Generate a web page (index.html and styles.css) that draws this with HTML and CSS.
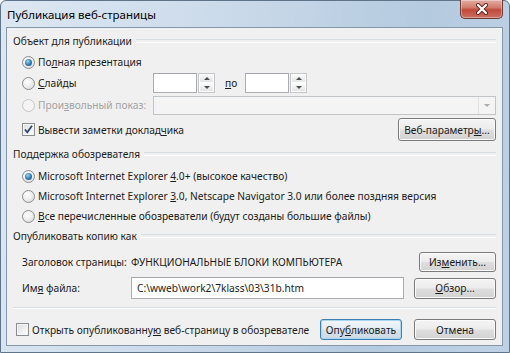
FILE: index.html
```html
<html>
<head>
	<link rel="stylesheet" href="styles.css">
</head>
<body>

<div class="window">
	<div class="titlebar">
		<span class="title">Публикация веб-страницы</span>
		<div class="close">
			<svg width="14" height="12" viewBox="0 0 14 12">
				<path d="M3 2 L11 10 M11 2 L3 10" stroke="#5a2520" stroke-width="4" stroke-linecap="round"/>
				<path d="M3 2 L11 10 M11 2 L3 10" stroke="#ffffff" stroke-width="2.2" stroke-linecap="round"/>
			</svg>
		</div>
	</div>

	<div class="client">
		<div class="legend g1">Объект для публикации</div>

		<div class="row r-full">
			<label class="opt"><span class="radio checked"></span><span>По<u>л</u>ная презентация</span></label>
		</div>

		<div class="row r-slides">
			<label class="opt opt-col"><span class="radio"></span><span><u>С</u>лайды</span></label>
			<div class="spin">
				<div class="spin-input"></div>
				<div class="spin-btns">
					<div class="spin-up"><span class="tri-up"></span></div>
					<div class="spin-down"><span class="tri-down"></span></div>
				</div>
			</div>
			<span class="to"><u>п</u>о</span>
			<div class="spin">
				<div class="spin-input"></div>
				<div class="spin-btns">
					<div class="spin-up"><span class="tri-up"></span></div>
					<div class="spin-down"><span class="tri-down"></span></div>
				</div>
			</div>
		</div>

		<div class="row r-custom">
			<label class="opt opt-col disabled"><span class="radio"></span><span>Прои<u>з</u>вольный показ:</span></label>
			<div class="combo"><div class="combo-arrow"><span class="tri-down light"></span></div></div>
		</div>

		<div class="row r-notes">
			<label class="opt"><span class="check checked">
				<svg width="11" height="11" viewBox="0 0 11 11"><path d="M2 5.5 L4.3 8.3 L9 1.8" fill="none" stroke="#2c4a6e" stroke-width="1.8"/></svg>
			</span><span>Вывести заметки доклад<u>ч</u>ика</span></label>
			<div class="btn btn-web"><span>Веб-параметр<u>ы</u>...</span></div>
		</div>

		<div class="legend g2">Поддержка обозревателя</div>

		<div class="row r-ie4">
			<label class="opt"><span class="radio checked"></span><span>Microsoft Internet Explorer <u>4</u>.0+ (высокое качество)</span></label>
		</div>
		<div class="row r-ie3">
			<label class="opt"><span class="radio"></span><span>Microsoft Internet Explorer <u>3</u>.0, Netscape Navigator 3.0 или более поздняя версия</span></label>
		</div>
		<div class="row r-all">
			<label class="opt"><span class="radio"></span><span><u>В</u>се перечисленные обозреватели (будут созданы большие файлы)</span></label>
		</div>

		<div class="legend g3">Опубликовать копию как</div>

		<div class="row r-title">
			<span class="field-label">Заголовок страницы:</span>
			<span class="field-value">ФУНКЦИОНАЛЬНЫЕ БЛОКИ КОМПЬЮТЕРА</span>
			<div class="btn btn-change"><span>Из<u>м</u>енить...</span></div>
		</div>

		<div class="row r-file">
			<span class="field-label">Им<u>я</u> файла:</span>
			<div class="text-input"><span>C:\wweb\work2\7klass\03\31b.htm</span></div>
			<div class="btn btn-browse"><span><u>О</u>бзор...</span></div>
		</div>

		<div class="separator"></div>

		<div class="row r-bottom">
			<label class="opt-open"><span class="check"></span><span>Открыть опубликованну<u>ю</u> веб-страницу в обозревателе</span></label>
			<div class="btn btn-default"><span>Опу<u>б</u>ликовать</span></div>
			<div class="btn btn-cancel"><span>Отмена</span></div>
		</div>
	</div>
</div>

</body>
</html>
```

FILE: styles.css
```css
* {
	box-sizing: border-box;
}
body {
	margin: 0;
	font-family: "Noto Sans", "Open Sans", sans-serif;
	font-size: 10.2px;
	color: #1b1b1b;
}
u {
	text-underline-offset: 1px;
}

/* window frame */
.window {
	width: 510px;
	height: 353px;
	border: 1px solid #5f7489;
	border-radius: 6px 6px 0 0;
	background: linear-gradient(100deg, #dce7f2 0%, #cbdaea 40%, #b4cadf 75%, #bfd2e5 100%);
	padding: 0 6px 6px 5px;
	display: flex;
	flex-direction: column;
}
.titlebar {
	height: 26px;
	display: flex;
	justify-content: space-between;
	align-items: flex-start;
}
.title {
	font-size: 11.5px;
	line-height: 17px;
	margin: 5px 0 0 1px;
	color: #000;
}
.close {
	width: 43px;
	height: 19px;
	margin-top: -1px;
	border: 1px solid #6a3a35;
	border-top: none;
	border-radius: 0 0 5px 5px;
	background: linear-gradient(#e2aea4 0%, #d27a6c 42%, #c04a3c 55%, #cc7060 100%);
	box-shadow: inset 0 0 0 1px rgba(255, 255, 255, 0.35);
	display: flex;
	align-items: center;
	justify-content: center;
}

/* client area */
.client {
	flex: 1;
	background: #f0f0f0;
	border: 1px solid #8497ab;
	padding: 0 6px;
	display: flex;
	flex-direction: column;
}
.legend {
	height: 16px;
	display: flex;
	align-items: center;
	color: #1e1e1e;
}
.legend::after {
	content: "";
	flex: 1;
	height: 2px;
	border-top: 1px solid #d5dfe5;
	border-bottom: 1px solid #ffffff;
	margin-left: 4px;
}
.g1 { margin-top: 5px; }
.g2 { margin-top: 5px; }
.g3 { margin-top: 2px; }

.row {
	display: flex;
	align-items: center;
	height: 20px;
}
.r-full { margin-top: 3px; }
.r-slides { margin-top: 1px; }
.r-custom { margin-top: 2px; }
.r-notes { margin-top: 3px; height: 23px; }
.r-ie4 { margin-top: 4px; }
.r-title { margin-top: 8px; }
.r-file { margin-top: 5px; height: 22px; }
.r-bottom { margin-top: 10px; height: 21px; }

.opt {
	display: flex;
	align-items: center;
	padding-left: 9px;
	white-space: nowrap;
}
.opt-col {
	width: 140px;
	flex: none;
}
.disabled {
	color: #a3a3a3;
}

/* radio and check */
.radio {
	width: 13px;
	height: 13px;
	border-radius: 50%;
	border: 1px solid #8b8e91;
	background: radial-gradient(circle at 40% 35%, #ffffff 0%, #eeeeee 45%, #d3d5d7 100%);
	margin-right: 3px;
	display: flex;
	align-items: center;
	justify-content: center;
	flex: none;
}
.radio.checked::after {
	content: "";
	width: 7px;
	height: 7px;
	border-radius: 50%;
	background: radial-gradient(circle at 40% 35%, #9fd8f4 0%, #3c86bd 45%, #17406a 100%);
}
.disabled .radio {
	border-color: #c4c6c8;
	background: #f4f4f4;
}
.check {
	width: 13px;
	height: 13px;
	border: 1px solid #8b8e91;
	background: linear-gradient(135deg, #dcdcdc 0%, #f2f2f2 60%, #fcfcfc 100%);
	box-shadow: inset 0 0 0 1px #f6f6f6;
	margin-right: 3px;
	display: flex;
	align-items: center;
	justify-content: center;
	flex: none;
}

/* spin boxes */
.spin {
	display: flex;
	width: 62px;
	height: 20px;
	flex: none;
}
.spin-input {
	width: 44px;
	background: #fff;
	border: 1px solid #abadb3;
	border-top-color: #a3a6ad;
	margin-right: 1px;
}
.spin-btns {
	width: 17px;
	display: flex;
	flex-direction: column;
	border: 1px solid #c4c6c9;
	background: #f2f2f2;
}
.spin-up, .spin-down {
	flex: 1;
	display: flex;
	align-items: center;
	justify-content: center;
	background: linear-gradient(#fafafa, #e4e4e4);
	border: 1px solid #fdfdfd;
}
.tri-up {
	border-left: 3px solid transparent;
	border-right: 3px solid transparent;
	border-bottom: 3px solid #4a4d52;
}
.tri-down {
	border-left: 3px solid transparent;
	border-right: 3px solid transparent;
	border-top: 3px solid #4a4d52;
}
.tri-down.light {
	border-top-color: #a8abaf;
}
.to {
	width: 30px;
	padding-left: 10px;
	flex: none;
}

/* combo box */
.combo {
	flex: 1;
	height: 19px;
	border: 1px solid #c2c5c8;
	background: #f4f4f4;
	display: flex;
	justify-content: flex-end;
}
.combo-arrow {
	width: 17px;
	display: flex;
	align-items: center;
	justify-content: center;
	border-left: 1px solid #e2e2e2;
}

/* buttons */
.btn {
	height: 21px;
	border: 1px solid #7a7a7a;
	border-radius: 3px;
	background: linear-gradient(#f4f4f4 0%, #ececec 48%, #dedede 52%, #d2d2d2 100%);
	box-shadow: inset 0 0 0 1px #fbfbfb;
	display: flex;
	align-items: center;
	justify-content: center;
	white-space: nowrap;
	flex: none;
}
.btn-web {
	width: 98px;
	height: 23px;
	margin-left: auto;
}
.btn-change {
	width: 77px;
	height: 20px;
	margin-left: auto;
}
.btn-browse {
	width: 82px;
	margin-left: 10px;
}
.btn-default {
	width: 82px;
	margin-left: auto;
	border-color: #3c7fb1;
	background: linear-gradient(#f0f5f9 0%, #e4ecf2 48%, #d6e1ea 52%, #cdd9e3 100%);
	box-shadow: inset 0 0 0 1px #a9d6f0;
}
.btn-cancel {
	width: 82px;
	margin-left: 12px;
}

/* fields */
.field-label {
	width: 118px;
	padding-left: 9px;
	flex: none;
	white-space: nowrap;
}
.field-value {
	white-space: nowrap;
}
.text-input {
	flex: 1;
	height: 22px;
	background: #fff;
	border: 1px solid #abadb3;
	border-top-color: #a3a6ad;
	padding-left: 5px;
	display: flex;
	align-items: center;
	white-space: nowrap;
}
.separator {
	margin-top: 8px;
	height: 2px;
	border-top: 1px solid #d5dfe5;
	border-bottom: 1px solid #ffffff;
}
.opt-open {
	display: flex;
	align-items: center;
	padding-left: 3px;
	white-space: nowrap;
}
```
